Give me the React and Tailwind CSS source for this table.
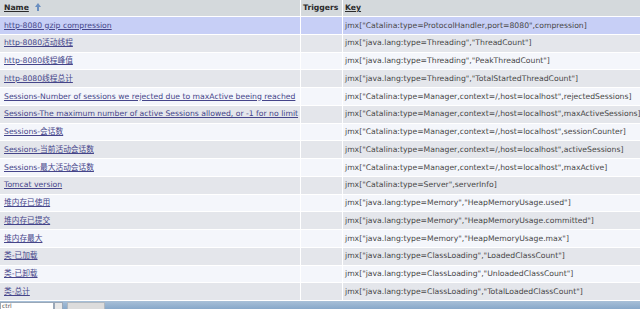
const rows = [
  ["http-8080 gzip compression", 'jmx["Catalina:type=ProtocolHandler,port=8080",compression]'],
  ["http-8080活动线程", 'jmx["java.lang:type=Threading","ThreadCount"]'],
  ["http-8080线程峰值", 'jmx["java.lang:type=Threading","PeakThreadCount"]'],
  ["http-8080线程总计", 'jmx["java.lang:type=Threading","TotalStartedThreadCount"]'],
  ["Sessions-Number of sessions we rejected due to maxActive beeing reached", 'jmx["Catalina:type=Manager,context=/,host=localhost",rejectedSessions]'],
  ["Sessions-The maximum number of active Sessions allowed, or -1 for no limit", 'jmx["Catalina:type=Manager,context=/,host=localhost",maxActiveSessions]'],
  ["Sessions-会话数", 'jmx["Catalina:type=Manager,context=/,host=localhost",sessionCounter]'],
  ["Sessions-当前活动会话数", 'jmx["Catalina:type=Manager,context=/,host=localhost",activeSessions]'],
  ["Sessions-最大活动会话数", 'jmx["Catalina:type=Manager,context=/,host=localhost",maxActive]'],
  ["Tomcat version", 'jmx["Catalina:type=Server",serverInfo]'],
  ["堆内存已使用", 'jmx["java.lang:type=Memory","HeapMemoryUsage.used"]'],
  ["堆内存已提交", 'jmx["java.lang:type=Memory","HeapMemoryUsage.committed"]'],
  ["堆内存最大", 'jmx["java.lang:type=Memory","HeapMemoryUsage.max"]'],
  ["类-已加载", 'jmx["java.lang:type=ClassLoading","LoadedClassCount"]'],
  ["类-已卸载", 'jmx["java.lang:type=ClassLoading","UnloadedClassCount"]'],
  ["类-总计", 'jmx["java.lang:type=ClassLoading","TotalLoadedClassCount"]'],
];

export default function App() {
  return (
    <div
      className="w-[640px] h-[309px] overflow-hidden bg-[#f5f7fb] text-[7.7px] leading-none"
      style={{ fontFamily: '"DejaVu Sans", Verdana, "Noto Sans CJK SC", sans-serif' }}
    >
      <div className="grid grid-cols-[301px_42px_1fr] h-[17px] bg-[#d4d9dc] border-b border-white font-bold text-[#2a2a2a]">
        <div className="flex items-center pl-[4px] border-r border-white">
          <span className="underline">Name</span>
          <svg width="8" height="8" viewBox="0 0 8 8" className="ml-[5px] -mt-[3px]">
            <path d="M4 0 L7 4 L5 4 L5 8 L3 8 L3 4 L1 4 Z" fill="#6a8fc0" />
          </svg>
        </div>
        <div className="flex items-center pl-[2px] border-r border-white">Triggers</div>
        <div className="flex items-center pl-[2px]">
          <span className="underline">Key</span>
        </div>
      </div>
      {rows.map(([name, key], i) => {
        const bg = i === 0 ? "bg-[#c7cff6]" : i % 2 === 1 ? "bg-[#e4e6eb]" : "bg-[#f4f6fb]";
        return (
          <div
            key={i}
            className={`grid grid-cols-[301px_42px_1fr] h-[17.75px] border-b border-white ${bg}`}
          >
            <div className="flex items-center pl-[4px] border-r border-white text-[#45458a] whitespace-nowrap overflow-hidden">
              <span className="underline">{name}</span>
            </div>
            <div className="border-r border-white"></div>
            <div className="flex items-center pl-[2px] text-[#474747] whitespace-nowrap overflow-hidden">
              {key}
            </div>
          </div>
        );
      })}
      <div className="h-[10px] bg-gradient-to-b from-[#a8c0d8] to-[#7fa2c6] flex items-start pt-[1px]">
        <div className="w-[54px] h-[9px] bg-white border border-[#9aa8b8] text-[6px] text-[#555] pl-[1px]">ctrl</div>
        <div className="w-[9px] h-[9px] bg-[#e8e8e8] border border-[#9aa8b8]"></div>
        <div className="w-[38px] h-[9px] bg-[#dcdcdc] border border-[#b0b8c0] ml-[4px]"></div>
      </div>
    </div>
  );
}
